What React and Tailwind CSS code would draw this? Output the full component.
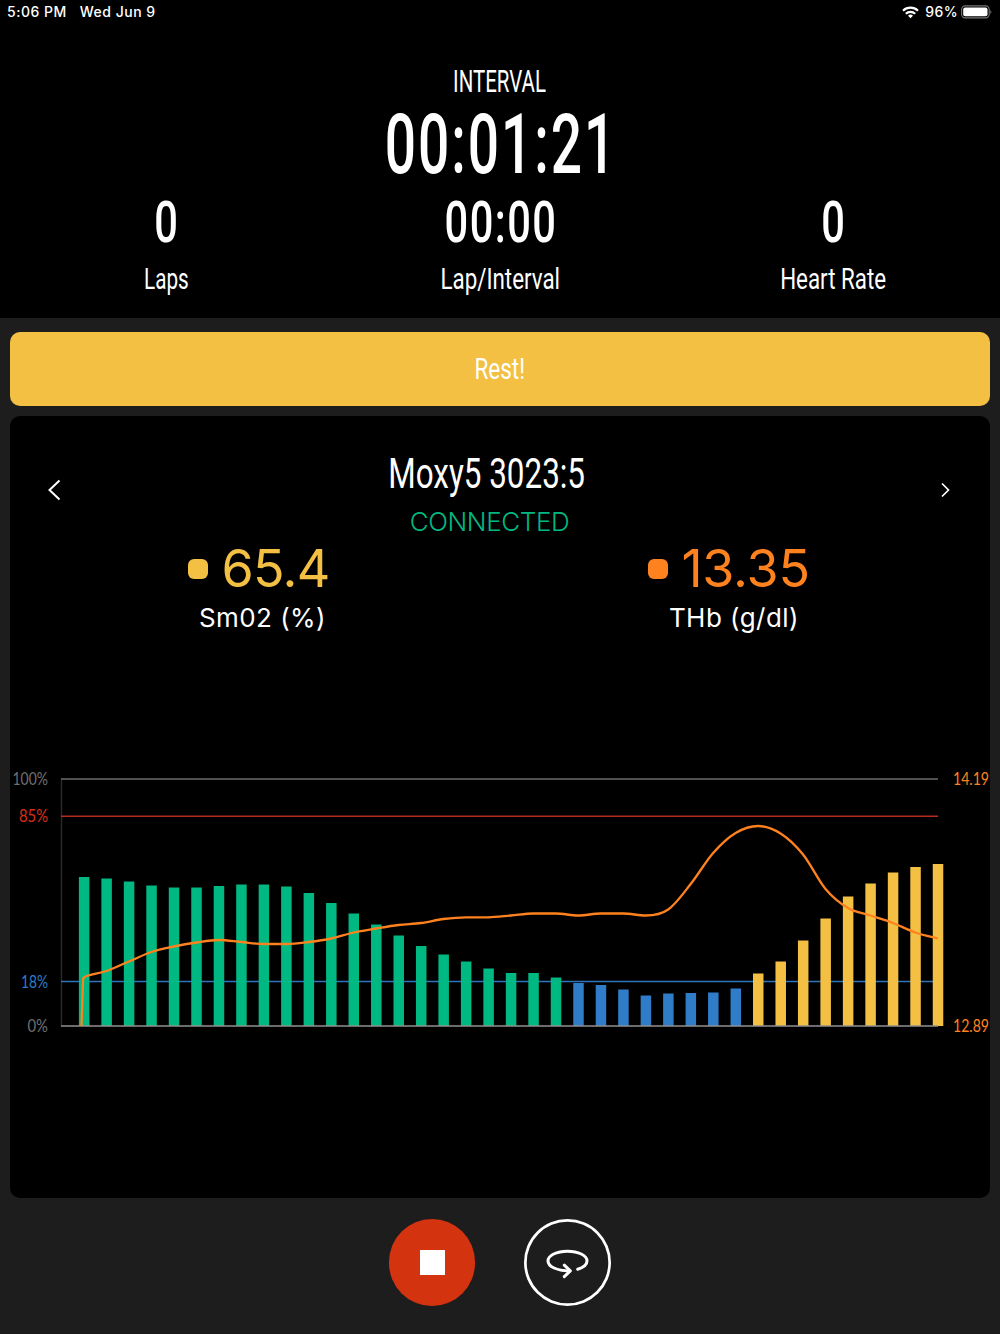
import React from "react";

const GREEN = "#00b881";
const BLUE = "#2f7dc8";
const YELLOW = "#f3c044";
const ORANGE = "#ff821e";

const CHART_LEFT = 51;
const CHART_RIGHT = 928;
const CHART_BOTTOM = 257;
const BAR_START = 74;
const BAR_STEP = 22.47;

// bar heights in px, oldest sample first
const smo2 = [
    149, 147.5, 144.5, 140.5, 138.5, 138.5, 140, 141.5, 141.5, 139.5, 133, 123, 112.5,
    101.5, 90.5, 80, 71.5, 64.5, 57.5, 53, 53, 48.5,
    43, 41, 36.5, 30.5, 32.5, 33, 33.5, 37.5,
    52.5, 64.5, 85.5, 107.5, 129.5, 142.5, 153.5, 159, 162
];

const thb = [
    49, 55, 64.5, 74, 79.5, 83.5, 86, 84, 82, 82, 84, 87.5, 93.5, 97.5, 101, 103, 107,
    108.7, 108.7, 110.5, 112.5, 112.5, 110.5, 112.5, 112.5, 110.5, 116.5, 142, 173, 193,
    200, 192.5, 171.5, 137, 118, 110.5, 103, 93.5, 87.5
];

function barColor(index)
{
    if (index < 22) return GREEN;
    if (index < 30) return BLUE;
    return YELLOW;
}

function linePath()
{
    const pts = thb.map((v, i) => [BAR_START + i * BAR_STEP, CHART_BOTTOM - v]);
    const slope = (i) => {
        if (i === 0 || i === pts.length - 1) return 0.25;
        const a = pts[i][1] - pts[i - 1][1];
        const b = pts[i + 1][1] - pts[i][1];
        return a * b <= 0 ? 0 : (a + b) / 2 / BAR_STEP;
    };
    const third = BAR_STEP / 3;
    let d = `M71.5 ${CHART_BOTTOM} L73 211 Q73 208.5 75.5 207.5`;
    for (let i = 1; i < pts.length; i++)
    {
        const [x0, y0] = pts[i - 1];
        const [x1, y1] = pts[i];
        d += ` C${x0 + third} ${i === 1 ? y0 - 3 : y0 + slope(i - 1) * third} ${x1 - third} ${y1 - slope(i) * third} ${x1} ${y1}`;
    }
    return d;
}

function StatusBar()
{
    return (
        <div className="flex h-6 items-center justify-between pl-[7px] pr-2 font-['Inter',sans-serif] text-[14px] font-medium leading-6 text-white">
            <div className="flex gap-[13px] tracking-[0.5px]">
                <span>5:06 PM</span>
                <span>Wed Jun 9</span>
            </div>
            <div className="flex items-center">
                <svg className="mr-[6px]" width="17" height="13" viewBox="0 0 17 13" fill="none" stroke="white" strokeWidth="2.1">
                    <path d="M1 4.7a10.8 10.8 0 0 1 15 0" />
                    <path d="M3.8 7.8a6.8 6.8 0 0 1 9.4 0" />
                    <path d="M8.5 12.2 6 9.7a3.6 3.6 0 0 1 5 0z" fill="white" stroke="none" />
                </svg>
                <span className="mr-[3px] tracking-[0.4px]">96%</span>
                <svg width="31" height="14" viewBox="0 0 31 14" fill="none">
                    <rect x="0.6" y="0.9" width="27.6" height="12" rx="3.6" stroke="#777" strokeWidth="1.1" />
                    <rect x="2.2" y="2.5" width="24.3" height="8.8" rx="2" fill="white" />
                    <path d="M29.4 4.9q2 2 0 4z" fill="#777" />
                </svg>
            </div>
        </div>
    );
}

function Stat({ value, label, labelClass })
{
    return (
        <div className="flex flex-1 flex-col items-center whitespace-nowrap">
            <span className="h-[77px] scale-x-[0.73] pl-[2px] text-[57px] font-medium leading-[77px] tracking-[2px]">{value}</span>
            <span className={`h-9 text-[30px] leading-9 ${labelClass}`}>{label}</span>
        </div>
    );
}

function Reading({ value, label, color, dot, labelClass, className })
{
    return (
        <div className={`flex flex-col ${className}`}>
            <div className="flex h-[60px] items-center gap-[13px]">
                <span className={`size-[20px] rounded-[6px] ${dot}`} />
                <span className={`text-[52px] leading-[62px] ${color}`}>{value}</span>
            </div>
            <span className={`h-[37px] whitespace-nowrap text-[26px] leading-[37px] tracking-[0.45px] text-white ${labelClass}`}>{label}</span>
        </div>
    );
}

function AxisLabel({ x, y, width, fill, children })
{
    return (
        <text x={x} y={y} fill={fill} textLength={width} lengthAdjust="spacingAndGlyphs">{children}</text>
    );
}

function Chart()
{
    return (
        <svg className="mt-[133px] block font-['Lato',sans-serif] text-[16.5px]" width="980" height="270" viewBox="0 0 980 270">
            <g strokeWidth="1.4">
                <path d={`M${CHART_LEFT + 0.5} 10V257`} stroke="#2c2c2c" />
                <path d={`M${CHART_LEFT} 10H${CHART_RIGHT}`} stroke="#6b6b6b" />
                <path d={`M${CHART_LEFT} 47.2H${CHART_RIGHT}`} stroke="#b92c1d" />
                <path d={`M${CHART_LEFT} 212.5H${CHART_RIGHT}`} stroke="#2c74bb" />
            </g>
            {
                smo2.map((h, i) =>
                    <rect key={i} x={BAR_START - 5.1 + i * BAR_STEP} y={CHART_BOTTOM - h} width="10.5" height={h} fill={barColor(i)} />
                )
            }
            <path d={`M${CHART_LEFT} 257H${CHART_RIGHT}`} stroke="#909090" strokeWidth="1.7" />
            <path d={linePath()} fill="none" stroke={ORANGE} strokeWidth="2.3" />
            <AxisLabel x="2.5" y="16" width="35.5" fill="#707070">100%</AxisLabel>
            <AxisLabel x="9" y="53" width="29" fill="#dc2d1b">85%</AxisLabel>
            <AxisLabel x="11" y="218.5" width="27" fill={BLUE}>18%</AxisLabel>
            <AxisLabel x="17.5" y="263" width="20.5" fill="#707070">0%</AxisLabel>
            <AxisLabel x="943" y="16" width="36" fill={ORANGE}>14.19</AxisLabel>
            <AxisLabel x="943" y="263" width="36" fill={ORANGE}>12.89</AxisLabel>
        </svg>
    );
}

function App()
{
    return (
        <div className="flex h-[1334px] w-[1000px] flex-col overflow-hidden bg-[#1d1d1d] font-['Roboto',sans-serif] text-white">
            <header className="h-[318px] bg-black">
                <StatusBar />
                <div className="mt-9 flex flex-col items-center whitespace-nowrap">
                    <h2 className="h-[43px] scale-x-[0.64] text-[32px] leading-[43px]">INTERVAL</h2>
                    <h1 className="h-[81px] scale-x-[0.655] pl-[2px] text-[84px] font-medium leading-[84px] tracking-[3px]">00:01:21</h1>
                </div>
                <div className="flex">
                    <Stat value="0" label="Laps" labelClass="scale-x-[0.69]" />
                    <Stat value="00:00" label="Lap/Interval" labelClass="scale-x-[0.745]" />
                    <Stat value="0" label="Heart Rate" labelClass="scale-x-[0.745]" />
                </div>
            </header>

            <div className="mx-[10px] mt-[14px] flex h-[74px] shrink-0 items-center justify-center rounded-[10px] bg-[#f3c044]">
                <span className="scale-x-[0.75] text-[30px] leading-[76px]">Rest!</span>
            </div>

            <main className="mx-[10px] mt-[10px] h-[782px] shrink-0 rounded-[10px] bg-black pt-[30px] font-['Inter',sans-serif]">
                <div className="flex items-center justify-between pl-[37px] pr-[39px]">
                    <svg className="mb-2" width="15" height="24" viewBox="0 0 15 24" fill="none" stroke="white" strokeWidth="2">
                        <path d="M12.5 2.5 2.5 12l10 9.5" />
                    </svg>
                    <div className="mr-[23px] flex flex-col items-center whitespace-nowrap">
                        <span className="mr-[6px] h-[55px] scale-x-[0.73] font-['Roboto',sans-serif] text-[43px] leading-[55px]">Moxy5 3023:5</span>
                        <span className="h-[41px] text-[26px] font-light leading-[41px] tracking-[-0.4px] text-[#00b881]">CONNECTED</span>
                    </div>
                    <svg className="mb-2" width="11" height="18" viewBox="0 0 11 18" fill="none" stroke="white" strokeWidth="1.7">
                        <path d="M2 2.5 8.5 9 2 15.5" />
                    </svg>
                </div>
                <div className="-mt-[3px] flex">
                    <Reading className="w-[460px] pl-[178.4px]" value="65.4" label="Sm02 (%)" color="tracking-[-0.7px] text-[#f3c044]" dot="bg-[#f3c044]" labelClass="ml-[10.5px]" />
                    <Reading className="pl-[178.4px]" value="13.35" label="THb (g/dl)" color="tracking-[-0.2px] text-[#ff821e]" dot="bg-[#ff821e]" labelClass="ml-[20.5px]" />
                </div>
                <Chart />
            </main>

            <footer className="mt-[21px] flex items-center justify-center gap-[49px] pr-px">
                <button className="flex size-[86.5px] items-center justify-center rounded-full bg-[#d43310]">
                    <span className="ml-px size-[25px] bg-white" />
                </button>
                <button className="flex size-[86.5px] items-center justify-center rounded-full shadow-[inset_0_0_0_2.7px_white]">
                    <svg width="44" height="34" viewBox="0 0 44 34" fill="none" stroke="white" strokeWidth="3" strokeLinecap="round" strokeLinejoin="round">
                        <path d="M32.7 24.2C38.5 22.4 42 19.5 42 16 42 10.4 33.3 6.2 22.5 6.2S3 10.4 3 16s9 9.8 21.5 9.9" />
                        <path d="M19.3 20.2l6 5.7-6 5.7" />
                    </svg>
                </button>
            </footer>
        </div>
    );
}

export default App;
